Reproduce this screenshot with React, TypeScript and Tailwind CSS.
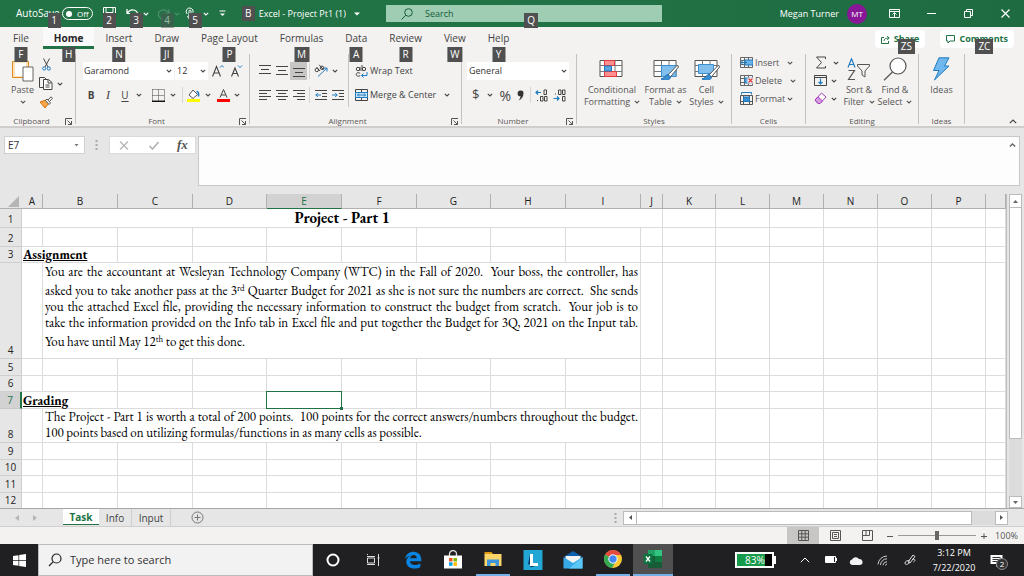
import React from 'react';

interface IconProps {
  w: number;
  h: number;
  className?: string;
  children: React.ReactNode;
}

const Icon: React.FC<IconProps> = ({ w, h, className = '', children }) => (
  <svg
    width={w}
    height={h}
    viewBox={`0 0 ${w} ${h}`}
    fill="none"
    stroke="currentColor"
    className={`shrink-0 ${className}`}
    aria-hidden="true"
  >
    {children}
  </svg>
);

const Chevron: React.FC<{ className?: string }> = ({ className = '' }) => (
  <Icon w={6} h={4} className={className}>
    <path d="M0.8 0.8L3 3L5.2 0.8" strokeWidth={1.1} />
  </Icon>
);

const KeyTip: React.FC<{ label: string; className?: string }> = ({ label, className = '' }) => (
  <span
    className={`absolute z-10 flex h-[15px] min-w-[13px] items-center justify-center bg-[#505050] px-[3px] text-[10px] font-normal text-white ${className}`}
  >
    {label}
  </span>
);

const Divider: React.FC<{ className?: string }> = ({ className = 'h-[70px] bg-[#c4c2c0]' }) => (
  <div className={`w-px shrink-0 ${className}`} />
);

/* ---------- Title bar ---------- */

const TitleBar: React.FC = () => (
  <header className="flex h-[27px] items-center bg-gradient-to-r from-[#217346] via-[#217346] to-[#1f6b41] text-white">
    <div className="flex w-[386px] shrink-0 items-center self-stretch pl-4">
      <label htmlFor="autosave" className="relative flex h-full items-center text-[10px]">
        AutoSave
        <KeyTip label="1" className="-right-px top-[13px]" />
      </label>
      <button
        id="autosave"
        role="switch"
        aria-checked="false"
        className="ml-[2px] flex h-[13px] w-[31px] items-center justify-between rounded-full border border-white pl-[3px] pr-[3px] text-[8px]"
      >
        <span className="size-[6px] rounded-full bg-white" />
        Off
      </button>
      <button aria-label="Save" className="relative ml-[10px] flex h-full w-[14px] items-center">
        <Icon w={13} h={13}>
          <path d="M0.5 0.5h12v12h-10l-2-2zM3 0.5v5h7v-5M4 12v-4h5v4" />
        </Icon>
        <KeyTip label="2" className="left-0 top-[13px]" />
      </button>
      <button aria-label="Undo" className="relative ml-[9px] flex h-full w-[24px] items-center">
        <Icon w={13} h={12}>
          <path d="M1 1v4.5h4.5M1.2 5.2C3 2.5 6 1.2 8.8 2.3c3.4 1.4 3.8 5.2 1.2 7.2L8 11.5" strokeWidth={1.2} />
        </Icon>
        <Chevron className="ml-1" />
        <KeyTip label="3" className="left-1 top-[13px]" />
      </button>
      <button aria-label="Redo" className="relative ml-[7px] flex h-full w-[24px] items-center text-[#4d8f6a]">
        <Icon w={13} h={12}>
          <path d="M12 1v4.5H7.5M11.8 5.2C10 2.5 7 1.2 4.2 2.3c-3.4 1.4-3.8 5.2-1.2 7.2L5 11.5" strokeWidth={1.2} />
        </Icon>
        <Chevron className="ml-1" />
        <KeyTip label="4" className="left-1 top-[13px] opacity-50" />
      </button>
      <button aria-label="Touch mode" className="relative ml-1 flex h-full w-[24px] items-center">
        <Icon w={12} h={14}>
          <path d="M2.2 7A3.5 3.5 0 1 1 8 5.5M4 9V4.2a1 1 0 0 1 2 0V8l4 1v4H5L2.5 9.5z" />
        </Icon>
        <Chevron className="ml-[6px]" />
        <KeyTip label="5" className="left-1 top-[13px]" />
      </button>
      <button aria-label="Customize quick access" className="ml-[10px]">
        <Icon w={7} h={7}>
          <path d="M0.5 1h6" />
          <path d="M1 3.5h5L3.5 6z" fill="currentColor" stroke="none" />
        </Icon>
      </button>
      <button className="relative ml-[16px] flex h-full items-center gap-2 pl-[17px] text-[9px]">
        <KeyTip label="B" className="left-0 top-[6px]" />
        Excel - Project Pt1 (1)
        <Icon w={6} h={4}>
          <path d="M0 0.5h6L3 3.5z" fill="currentColor" stroke="none" />
        </Icon>
      </button>
    </div>
    <label className="relative flex h-[17px] w-[27%] items-center gap-3 bg-[#9fcdb3] pl-[15px] text-[#185c37]">
      <Icon w={12} h={12}>
        <circle cx="7.5" cy="4.5" r="3.8" />
        <path d="M4.8 7.2L0.5 11.5" />
      </Icon>
      <input
        aria-label="Search"
        placeholder="Search"
        className="min-w-0 flex-1 text-[9px] outline-none placeholder:text-[#185c37]"
      />
      <KeyTip label="Q" className="left-1/2 top-2" />
    </label>
    <div className="ml-auto flex items-center">
      <span className="text-[9px]">Megan Turner</span>
      <button className="ml-2 flex size-[20px] items-center justify-center rounded-full bg-[#881798] text-[8px]">
        MT
      </button>
      <button aria-label="Ribbon display options" className="ml-[22px]">
        <Icon w={11} h={9}>
          <path d="M0.5 0.5h10v8h-10zM0.5 2.5h10M5.5 8V4M3.5 5.5l2-2 2 2" />
        </Icon>
      </button>
      <button aria-label="Minimize" className="ml-[27px]">
        <Icon w={9} h={9}>
          <path d="M0 4.5h9" />
        </Icon>
      </button>
      <button aria-label="Restore" className="ml-7">
        <Icon w={9} h={9}>
          <path d="M0.5 2.5h6v6h-6zM2.5 2.5v-2h6v6h-2" />
        </Icon>
      </button>
      <button aria-label="Close" className="ml-7 mr-[14px]">
        <Icon w={9} h={9}>
          <path d="M0.5 0.5l8 8M8.5 0.5l-8 8" strokeWidth={1.2} />
        </Icon>
      </button>
    </div>
  </header>
);

/* ---------- Ribbon tabs ---------- */

const ribbonTabs = [
  { name: 'File', tip: 'F' },
  { name: 'Home', tip: 'H' },
  { name: 'Insert', tip: 'N' },
  { name: 'Draw', tip: 'JI' },
  { name: 'Page Layout', tip: 'P' },
  { name: 'Formulas', tip: 'M' },
  { name: 'Data', tip: 'A' },
  { name: 'Review', tip: 'R' },
  { name: 'View', tip: 'W' },
  { name: 'Help', tip: 'Y' }
];

const RibbonTabs: React.FC = () => (
  <nav className="flex h-[22px] items-stretch pl-[2px] pr-[10px]">
    {ribbonTabs.map((tab) => (
      <button
        key={tab.name}
        className={`relative px-[11px] pt-[4px] text-[10px] leading-[15px] first:mr-[3px] ${
          tab.name === 'Home'
            ? 'border-b-[3px] border-[#217346] bg-[#fbfafa] font-bold text-[#262626]'
            : 'pb-[3px] text-[#444444]'
        }`}
      >
        {tab.name}
        <KeyTip label={tab.tip} className="left-1/2 top-[20px] -translate-x-1/2" />
      </button>
    ))}
    <div className="ml-auto mt-[3px] flex h-[18px] gap-[15px] text-[9px] font-bold text-[#217346]">
      <button className="relative flex items-center gap-1 rounded-sm bg-white px-[6px]">
        <Icon w={9} h={9}>
          <path d="M3 2.5H0.5v6h7V6M3 6c0-2 1.5-3 5-3M6.2 1l2 2-2 2" />
        </Icon>
        Share
        <KeyTip label="ZS" className="left-[23px] top-[9px]" />
      </button>
      <button className="relative flex items-center gap-1 rounded-sm bg-white px-[6px]">
        <Icon w={9} h={9}>
          <path d="M0.5 0.5h8v5.5H4L2 8V6H0.5z" />
        </Icon>
        Comments
        <KeyTip label="ZC" className="left-[35px] top-[9px]" />
      </button>
    </div>
  </nav>
);

/* ---------- Ribbon body ---------- */

interface GroupProps {
  label: string;
  width: string;
  launcher?: boolean;
  children: React.ReactNode;
}

const Group: React.FC<GroupProps> = ({ label, width, launcher, children }) => (
  <section className={`relative flex h-[73px] shrink-0 flex-col ${width}`}>
    <div className="flex flex-1">{children}</div>
    <div className="text-center text-[8px] leading-[12px] text-[#5a5856]">{label}</div>
    {launcher && (
      <button aria-label={`${label} settings`} className="absolute bottom-[2px] right-[3px] text-[#555]">
        <Icon w={7} h={7}>
          <path d="M0.5 7V0.5H7M2.5 2.5l4 4M6.5 3v3.5H3" />
        </Icon>
      </button>
    )}
  </section>
);

const Lines: React.FC<{ rows: string; label: string; active?: boolean }> = ({ rows, label, active }) => (
  <button
    aria-label={label}
    className={`flex h-[18px] w-[17px] items-center justify-center text-[#444] ${active ? 'bg-[#c8c6c4]' : ''}`}
  >
    <Icon w={12} h={12}>
      <path d={rows} />
    </Icon>
  </button>
);

interface BigButtonProps {
  lines: string[];
  drop?: boolean;
  width: string;
  children: React.ReactNode;
}

const BigButton: React.FC<BigButtonProps> = ({ lines, drop, width, children }) => (
  <button className={`flex shrink-0 flex-col items-center pt-[3px] text-[9px] leading-[12px] text-[#555] ${width}`}>
    <span className="mb-1 flex h-[23px] items-center">{children}</span>
    <span>{lines[0]}</span>
    <span className="flex items-center gap-1">
      {lines[1]}
      {drop && <Chevron />}
    </span>
  </button>
);

const TableGlyph: React.FC = () => (
  <>
    <path d="M1 2.5h22v16H1z" fill="#fff" stroke="#555" />
    <path d="M1 7.5h22M1 13.5h22M8.500 2.5v16M16 2.5v16" stroke="#777" />
  </>
);

const BrushGlyph: React.FC = () => (
  <>
    <path d="M24.5 7L15 17l2 2.5L25.5 9z" fill="#fff" stroke="#555" />
    <path d="M15 16.5c-3 0-3 4-7 4.5 3 2.5 9 2 9.5-2z" fill="#3b8fd0" stroke="#1f6fb5" />
  </>
);

const CellGlyph: React.FC = () => (
  <>
    <path d="M0.5 1.5h12v10h-12zM4.5 1v11M8.5 1v11M0 4.5h13M0 8.5h13" stroke="#666" />
    <path d="M5 4h8v5H5z" fill="#6cb2e6" stroke="#1e7bc0" />
  </>
);

const Ribbon: React.FC = () => (
  <div className="flex h-[79px] items-start border-b-2 border-[#d0cecc] pt-[5px] text-[#444]">
    <Group label="Clipboard" width="w-[75px] pr-3" launcher>
      <button className="flex w-[39px] flex-col items-center pl-[9px] pt-[6px] text-[9px] leading-[12px] text-[#555]">
        <Icon w={22} h={22}>
          <path d="M0.5 1.5h16v16h-16z" fill="#fde3bd" stroke="#e08a1e" />
          <path d="M3 3h11v13H3z" fill="#fff" stroke="none" />
          <path d="M11 7h10v14H11z" fill="#fff" stroke="#666" />
        </Icon>
        <span className="mt-[2px]">Paste</span>
        <Chevron className="mt-1" />
      </button>
      <div className="flex flex-col gap-[6px] pl-[5px] pt-1">
        <button aria-label="Cut" className="pl-[1px]">
          <Icon w={9} h={13}>
            <path d="M1.5 0.5L6 9M7.5 0.5L3 9" stroke="#444" />
            <circle cx="2.2" cy="10.5" r="1.6" stroke="#1e7bc0" />
            <circle cx="6.8" cy="10.5" r="1.6" stroke="#1e7bc0" />
          </Icon>
        </button>
        <button aria-label="Copy" className="-ml-[2px] flex items-center gap-1">
          <Icon w={14} h={13}>
            <path d="M4.5 10.5h-4v-10h5l2 2" />
            <path d="M4.5 2.5h5l3.5 3v7H4.5zM9 3v3h3.5M6.5 8h4M6.5 10h4" fill="#fff" />
          </Icon>
          <Chevron />
        </button>
        <button aria-label="Format painter" className="-ml-[2px]">
          <Icon w={14} h={13}>
            <path d="M1 6l5 6 4-5-3-3z" fill="#f6a64b" stroke="#d9730b" />
            <path d="M6.5 4.5l3.5 4L11.5 7l-3.5-4zM9 4L12 0.8l1.5 1.5L10.5 5.5" fill="#fff" stroke="#555" />
          </Icon>
        </button>
      </div>
    </Group>
    <Divider />
    <Group label="Font" width="w-[173px] pr-3" launcher>
      <div className="flex flex-col gap-[6px] pl-[7px] pt-2">
        <div className="flex h-[18px] items-center gap-px text-[9px]">
          <label className="relative flex h-full w-[91px] items-center bg-white">
            <select aria-label="Font name" className="h-full w-full appearance-none pl-px text-[#333] outline-none">
              <option>Garamond</option>
            </select>
            <Chevron className="pointer-events-none absolute right-[2px]" />
          </label>
          <label className="relative flex h-full w-[33px] items-center bg-white">
            <select aria-label="Font size" className="h-full w-full appearance-none pl-[2px] text-[#333] outline-none">
              <option>12</option>
            </select>
            <Chevron className="pointer-events-none absolute right-[2px]" />
          </label>
          <button aria-label="Increase font size" className="ml-[3px]">
            <Icon w={12} h={14}>
              <path d="M0.5 12.5L4.5 2.5l4 10M2 9h5" strokeWidth={1.1} />
              <path d="M8 3.5l2-2 2 2" stroke="#1e7bc0" />
            </Icon>
          </button>
          <button aria-label="Decrease font size" className="ml-[6px]">
            <Icon w={12} h={14}>
              <path d="M0.5 12.5L4 4l3.5 8.5M2 9.5h4" strokeWidth={1.1} />
              <path d="M7 1.5l2 2 2-2" stroke="#1e7bc0" />
            </Icon>
          </button>
        </div>
        <div className="flex h-[18px] items-center text-[10px]">
          <button className="w-4 font-bold">B</button>
          <button className="w-[18px] font-['Liberation_Serif',serif] text-[12px] italic">I</button>
          <button className="w-4 underline underline-offset-2">U</button>
          <Chevron className="ml-[3px]" />
          <button aria-label="Borders" className="ml-[10px] flex items-center gap-[5px]">
            <Icon w={13} h={13}>
              <path d="M0.5 0.5v11M12.5 0.5v11M6.5 0.5v11M0.5 0.5h12M0.5 6.5h12" strokeDasharray="1 1" />
              <path d="M0 12.3h13" stroke="#111" strokeWidth={1.5} />
            </Icon>
            <Chevron />
          </button>
          <Divider className="ml-[6px] h-4 bg-[#d8d6d4]" />
          <button aria-label="Fill color" className="ml-1 flex items-center gap-[5px]">
            <Icon w={13} h={13}>
              <path d="M6 1l4.5 4.5L6 9.5 2 6z" fill="#fff" stroke="#555" />
              <path d="M9.5 2.5c2 0 2.5 2 2 5" stroke="#1e7bc0" strokeWidth={1.5} />
              <path d="M0 10h13v3H0z" fill="#ffff00" stroke="none" />
            </Icon>
            <Chevron />
          </button>
          <button aria-label="Font color" className="ml-[6px] flex items-center gap-1">
            <Icon w={13} h={13}>
              <path d="M3 8.5L6.5 0.5l3.5 8M4.2 6h4.6" />
              <path d="M0 10h13v3H0z" fill="#ff0000" stroke="none" />
            </Icon>
            <Chevron />
          </button>
        </div>
      </div>
    </Group>
    <Divider />
    <Group label="Alignment" width="w-[211px] pr-4" launcher>
      <div className="flex flex-col gap-[6px] pl-[6px] pt-2">
        <div className="flex h-[18px] items-center">
          <Lines label="Top align" rows="M0 0.5h12M2 4.5h8M0 8.5h12" />
          <Lines label="Middle align" rows="M0 1.5h12M2 5.5h8M0 9.5h12" />
          <Lines label="Bottom align" rows="M0 3.5h12M2 7.5h8M0 11.5h12" active />
          <Divider className="ml-[2px] h-4 bg-[#d8d6d4]" />
          <button aria-label="Orientation" className="ml-1 flex items-center gap-1">
            <Icon w={14} h={14}>
              <path d="M4 12.5L13 4M9.5 4H13v3.5" stroke="#1e7bc0" />
              <circle cx="2.8" cy="6" r="1.7" />
              <path d="M2.5 3l3.5 4M5.2 0.8l4.300 5" />
              <circle cx="8" cy="3.8" r="1.7" />
            </Icon>
            <Chevron />
          </button>
        </div>
        <div className="flex h-[18px] items-center">
          <Lines label="Align left" rows="M0 1.5h12M0 4.5h8M0 7.5h12M0 10.5h8" />
          <Lines label="Center" rows="M0 1.5h12M2 4.5h8M0 7.5h12M2 10.5h8" />
          <Lines label="Align right" rows="M0 1.5h12M4 4.5h8M0 7.5h12M4 10.5h8" />
          <Divider className="ml-[2px] h-4 bg-[#d8d6d4]" />
          <button aria-label="Decrease indent" className="ml-[5px]">
            <Icon w={12} h={12}>
              <path d="M0 1.5h12M7 4.5h5M7 7.5h5M0 10.5h12" />
              <path d="M6 6H0.8M2.8 4l-2 2 2 2" stroke="#1e7bc0" />
            </Icon>
          </button>
          <button aria-label="Increase indent" className="ml-[5px]">
            <Icon w={12} h={12}>
              <path d="M0 1.5h12M7 4.5h5M7 7.5h5M0 10.5h12" />
              <path d="M0 6h5.2M3.2 4l2 2-2 2" stroke="#1e7bc0" />
            </Icon>
          </button>
        </div>
      </div>
      <Divider className="ml-1 h-[53px] bg-[#c8c6c4]" />
      <div className="flex flex-col gap-[6px] pl-[6px] pt-2 text-[9px]">
        <button className="flex h-[18px] items-center gap-[2px] whitespace-nowrap">
          <Icon w={13} h={13}>
            <circle cx="3" cy="4" r="1.7" />
            <path d="M5 2v4M7 0v6M5.2 8.2c-3-1.2-4 0-4 1.3s2 2.3 4 1.2" />
            <circle cx="9" cy="4" r="1.7" />
            <path d="M12 7v3.5H6.5M8.5 8.5l-2 2 2 2" stroke="#1e7bc0" />
          </Icon>
          Wrap Text
        </button>
        <button className="flex h-[18px] items-center gap-[2px] whitespace-nowrap">
          <Icon w={13} h={12}>
            <path d="M0.5 0.5h12v11h-12zM6.5 0.5v3M6.5 8.5v3" stroke="#444" />
            <path d="M0.5 3.5h12v5h-12z" fill="#cfe6f8" stroke="#1e7bc0" />
            <path d="M2.5 6h8M4 4.5L2.5 6 4 7.5M9 4.5L10.5 6 9 7.5" stroke="#1e7bc0" />
          </Icon>
          Merge &amp; Center
          <Chevron className="ml-[6px]" />
        </button>
      </div>
    </Group>
    <Divider />
    <Group label="Number" width="w-[114px] pr-3" launcher>
      <div className="flex flex-col gap-[6px] pl-[5px] pt-2">
        <label className="relative flex h-[18px] w-[102px] items-center bg-white text-[9px]">
          <select aria-label="Number format" className="h-full w-full appearance-none pl-[2px] text-[#333] outline-none">
            <option>General</option>
          </select>
          <Chevron className="pointer-events-none absolute right-[2px]" />
        </label>
        <div className="flex h-[18px] items-center whitespace-nowrap">
          <button className="flex items-center gap-2 pl-[5px] text-[13px]">
            $ <Chevron />
          </button>
          <button className="ml-[6px] text-[14px]">%</button>
          <button aria-label="Comma style" className="ml-[6px]">
            <Icon w={7} h={11}>
              <path
                d="M3.5 0.5a2.5 2.5 0 0 1 3 2.7C6.5 6.5 5 9 1.5 10.5c1.5-1.5 2-3 2-4.2A2.9 2.9 0 0 1 3.5 0.5z"
                fill="#333"
                stroke="none"
              />
            </Icon>
          </button>
          <Divider className="ml-[6px] h-4 bg-[#d8d6d4]" />
          <button aria-label="Increase decimal" className="ml-1">
            <Icon w={13} h={13}>
              <path d="M6 3.5H1M3 1.5l-2 2 2 2" stroke="#1e7bc0" strokeWidth={1.2} />
              <path d="M9 1h2.5v4.5H9zM5.5 7.5H8V12H5.5zM9.5 7.5H12V12H9.5zM2.5 11v1" />
            </Icon>
          </button>
          <button aria-label="Decrease decimal" className="ml-[5px]">
            <Icon w={13} h={13}>
              <path d="M0.5 9.5h5.5M4 7.5l2 2-2 2" stroke="#1e7bc0" strokeWidth={1.2} />
              <path d="M5.5 1H8v4.5H5.5zM9.5 1H12v4.5H9.5zM9.5 7.5H12V12H9.5zM2.5 4.5v1" />
            </Icon>
          </button>
        </div>
      </div>
    </Group>
    <Divider />
    <Group label="Styles" width="w-[154px]">
      <BigButton lines={['Conditional', 'Formatting']} drop width="w-[66px] pl-1">
        <Icon w={26} h={22}>
          <TableGlyph />
          <path d="M5.5 2.5h10v5h-10zM5.5 13.5h12v5h-12z" fill="#ff8f8f" stroke="#e23b3b" />
          <path d="M5.5 8h7v5h-7z" fill="#5aa5e0" stroke="#1e7bc0" />
        </Icon>
      </BigButton>
      <BigButton lines={['Format as', 'Table']} drop width="w-[45px]">
        <Icon w={26} h={22}>
          <TableGlyph />
          <path d="M8.5 7.5H23v11H8.5z" fill="#83bfed" stroke="#3b8fd0" />
          <BrushGlyph />
        </Icon>
      </BigButton>
      <BigButton lines={['Cell', 'Styles']} drop width="w-[37px]">
        <Icon w={26} h={22}>
          <TableGlyph />
          <path d="M4.5 6.5h15v9h-15z" fill="#83bfed" stroke="#3b8fd0" />
          <BrushGlyph />
        </Icon>
      </BigButton>
    </Group>
    <Divider />
    <Group label="Cells" width="w-[73px]">
      <div className="flex flex-col gap-[5px] pl-2 pt-[2px] text-[9px] leading-[13px] text-[#555]">
        <button className="flex items-center gap-[2px]">
          <Icon w={13} h={13}>
            <CellGlyph />
            <path d="M7 6.5H1M3 4.5l-2 2 2 2" stroke="#1e7bc0" />
          </Icon>
          Insert <Chevron className="ml-[6px]" />
        </button>
        <button className="flex items-center gap-[2px]">
          <Icon w={13} h={13}>
            <CellGlyph />
            <path d="M7.5 3.5h6v6h-6z" fill="#f3f2f1" stroke="none" />
            <path d="M8.5 4.5l4 4M12.5 4.5l-4 4" stroke="#e23b3b" strokeWidth={1.2} />
          </Icon>
          Delete <Chevron className="ml-[6px]" />
        </button>
        <button className="flex items-center gap-[2px]">
          <Icon w={13} h={13}>
            <path d="M0.5 3.5h12v9h-12zM3.5 3v10M9.5 3v10M0 9.5h13" stroke="#555" />
            <path d="M3.5 5h6v4.5h-6z" fill="#3b8fd0" stroke="#1e7bc0" />
            <path d="M1.5 2.5v-2h10v2" stroke="#1e7bc0" />
          </Icon>
          Format <Chevron />
        </button>
      </div>
    </Group>
    <Divider />
    <Group label="Editing" width="w-[112px]">
      <div className="flex w-[34px] flex-col gap-[5px] pl-2 pt-[2px]">
        <button aria-label="AutoSum" className="flex items-center gap-[6px]">
          <Icon w={13} h={13}>
            <path d="M11.5 3V1h-9l5 5.5-5 5.5h9v-2" />
          </Icon>
          <Chevron />
        </button>
        <button aria-label="Fill" className="flex items-center gap-1">
          <Icon w={13} h={13}>
            <path d="M0.5 1.5h12v10h-12zM0.5 3.5h12" />
            <path d="M6.5 4.5v5.5M4.5 8l2 2 2-2" stroke="#1e7bc0" strokeWidth={1.2} />
          </Icon>
          <Chevron />
        </button>
        <button aria-label="Clear" className="flex items-center gap-1">
          <Icon w={13} h={13}>
            <path d="M7.5 1L12 5 6 11.5H4L1 8z" fill="#fff" stroke="#a33fb5" />
            <path d="M4 4.8L8.5 9 6 11.5H4L1 8z" fill="#d79be3" stroke="#a33fb5" />
          </Icon>
          <Chevron />
        </button>
      </div>
      <BigButton lines={['Sort &', 'Filter']} drop width="w-[38px]">
        <Icon w={24} h={22}>
          <path d="M1 9.5L4.5 0.8 8 9.5M2.3 6.5h4.4" stroke="#1e7bc0" strokeWidth={1.2} />
          <path d="M1.5 12.5H7.5L1.5 21.5H8" strokeWidth={1.2} />
          <path d="M10.5 6.5h12v1.5l-4.5 5v6l-3-2v-4l-4.5-5z" />
        </Icon>
      </BigButton>
      <BigButton lines={['Find &', 'Select']} drop width="w-[34px]">
        <Icon w={24} h={24}>
          <circle cx="15" cy="9" r="8" fill="#fff" strokeWidth={1.2} />
          <path d="M9.5 15L1 23.3" strokeWidth={1.2} />
        </Icon>
      </BigButton>
    </Group>
    <Divider />
    <Group label="Ideas" width="w-[45px]">
      <BigButton lines={['Ideas']} width="w-full">
        <Icon w={19} h={24}>
          <path d="M7 0.8h10L12.5 9H17L2.5 23 7 13.5H1.5z" fill="#6fb7ec" stroke="#1e7bc0" />
        </Icon>
      </BigButton>
    </Group>
    <Divider />
    <button aria-label="Collapse ribbon" className="mb-[2px] ml-auto mr-[7px] self-end">
      <Icon w={8} h={5}>
        <path d="M0.8 4.2L4 1l3.2 3.2" strokeWidth={1.2} />
      </Icon>
    </button>
  </div>
);

/* ---------- Formula bar ---------- */

const FormulaBar: React.FC = () => (
  <div className="flex items-start bg-[#e6e6e6] pb-2 pl-1 pr-1 pt-2">
    <label className="flex h-[18px] w-[81px] items-center border border-[#d0d0d0] bg-white pr-[5px]">
      <input
        aria-label="Name box"
        defaultValue="E7"
        className="min-w-0 flex-1 pl-[3px] text-[10px] text-[#333] outline-none"
      />
      <Icon w={5} h={3}>
        <path d="M0.5 0h4L2.5 2.5z" fill="#777" stroke="none" />
      </Icon>
    </label>
    <Icon w={3} h={10} className="ml-[10px] mt-1">
      <path d="M1.5 0v10" stroke="#aaa" strokeWidth={2} strokeDasharray="2 2" />
    </Icon>
    <div className="ml-[11px] flex h-[18px] w-[87px] items-center border border-[#dadada] bg-white pl-[9px] text-[#b5b5b5]">
      <button aria-label="Cancel">
        <Icon w={10} h={9}>
          <path d="M1 0.5l8 8M9 0.5l-8 8" strokeWidth={1.3} />
        </Icon>
      </button>
      <button aria-label="Enter" className="ml-5">
        <Icon w={10} h={9}>
          <path d="M0.5 5L3.5 8L9.5 1" strokeWidth={1.7} />
        </Icon>
      </button>
      <button className="ml-[18px] font-['Liberation_Serif',serif] text-[13px] leading-[16px] font-bold text-[#555] italic">
        fx
      </button>
    </div>
    <div className="relative ml-[2px] flex h-[50px] flex-1 border border-[#c8c8c8] bg-[#fdfdfd]">
      <textarea aria-label="Formula" className="w-full resize-none outline-none" />
      <button aria-label="Collapse formula bar" className="absolute right-[3px] top-[6px] text-[#666]">
        <Icon w={7} h={4} className="block">
          <path d="M0.8 3.5L3.5 1l2.7 2.5" strokeWidth={1.4} />
        </Icon>
      </button>
    </div>
  </div>
);

/* ---------- Sheet ---------- */

const columns = [
  { name: 'A', width: 21 },
  { name: 'B', width: 75 },
  { name: 'C', width: 75 },
  { name: 'D', width: 74 },
  { name: 'E', width: 75 },
  { name: 'F', width: 75 },
  { name: 'G', width: 74 },
  { name: 'H', width: 75 },
  { name: 'I', width: 75 },
  { name: 'J', width: 22 },
  { name: 'K', width: 53 },
  { name: 'L', width: 54 },
  { name: 'M', width: 54 },
  { name: 'N', width: 54 },
  { name: 'O', width: 54 },
  { name: 'P', width: 54 },
  { name: '', width: 0 }
];

const cell = 'border-b border-r border-[#dcdcdc] p-0';
const heading = `${cell} pl-px text-[13px] leading-[15px] font-bold underline`;

const Blanks: React.FC<{ count: number }> = ({ count }) => (
  <>
    {Array.from({ length: count }, (_, i) => (
      <td key={i} className={cell} />
    ))}
  </>
);

const SheetRow: React.FC<{ n: number; height: string; children: React.ReactNode }> = ({ n, height, children }) => (
  <tr className={height}>
    <th
      scope="row"
      className={`border-b p-0 align-bottom text-[10px] leading-[15px] font-normal ${
        n === 7
          ? 'border-b-[#c8c8c8] border-r-2 border-r-[#217346] bg-[#d2d2d2] text-[#217346]'
          : 'border-r border-[#cfcfcf] bg-[#e6e6e6] text-[#222]'
      }`}
    >
      {n}
    </th>
    {children}
  </tr>
);

const assignment = [
  <>You are the accountant at Wesleyan Technology Company (WTC) in the Fall of 2020.&nbsp; Your boss, the controller, has</>,
  <>asked you to take another pass at the 3<sup className="text-[9px]">rd</sup> Quarter Budget for 2021 as she is not sure the numbers are correct.&nbsp; She sends</>,
  <>you the attached Excel file, providing the necessary information to construct the budget from scratch.&nbsp; Your job is to</>,
  <>take the information provided on the Info tab in Excel file and put together the Budget for 3Q, 2021 on the Input tab.</>
];

const Sheet: React.FC = () => (
  <main className="flex min-h-[200px] grow basis-0 bg-[#e6e6e6]">
    <div className="relative flex-1 overflow-hidden border-r border-[#bdbdbd] bg-white">
      <table className="absolute inset-x-0 top-0 w-full table-fixed border-separate border-spacing-0">
        <colgroup>
          <col style={{ width: 22 }} />
          {columns.map((c) => (
            <col key={c.name} style={c.width ? { width: c.width } : undefined} />
          ))}
        </colgroup>
        <thead>
          <tr className="h-[15px] bg-[#e6e6e6] text-[10px] leading-[14px]">
            <th aria-label="Select all" className="border-b border-[#b0b0b0] p-0">
              <Icon w={11} h={11} className="ml-2">
                <path d="M11 0v11H0z" fill="#b5b5b5" stroke="none" />
              </Icon>
            </th>
            {columns.map((c) => (
              <th
                key={c.name}
                scope="col"
                className={`border-r p-0 font-normal ${
                  c.name === 'E'
                    ? 'border-b border-b-[#217346] border-r-[#b0b0b0] bg-[#d2d2d2] text-[#217346]'
                    : 'border-b border-[#b0b0b0] text-[#222]'
                }`}
              >
                {c.name}
              </th>
            ))}
          </tr>
        </thead>
        <tbody className="font-['EB_Garamond','Liberation_Serif',serif] text-[13px] text-black [&_th]:font-['Open_Sans',sans-serif]">
          <SheetRow n={1} height="h-[19px]">
            <td colSpan={10} className={`${cell} text-center text-[15px] leading-[16px] font-bold`}>
              Project - Part 1
            </td>
            <Blanks count={7} />
          </SheetRow>
          <SheetRow n={2} height="h-[19px]">
            <Blanks count={17} />
          </SheetRow>
          <SheetRow n={3} height="h-4">
            <td colSpan={2} className={heading}>
              Assignment
            </td>
            <Blanks count={15} />
          </SheetRow>
          <SheetRow n={4} height="h-24">
            <td className={cell} />
            <td colSpan={8} className={`${cell} px-[2px] pt-px align-top leading-4`}>
              {assignment.map((line, i) => (
                <div key={i} className={`whitespace-nowrap [text-align-last:justify] ${i === 1 ? 'pt-[3px]' : ''}`}>
                  {line}
                </div>
              ))}
              <div className="pt-[3px]">
                You have until May 12<sup className="text-[9px]">th</sup> to get this done.
              </div>
            </td>
            <Blanks count={8} />
          </SheetRow>
          <SheetRow n={5} height="h-[17px]">
            <Blanks count={17} />
          </SheetRow>
          <SheetRow n={6} height="h-4">
            <Blanks count={17} />
          </SheetRow>
          <SheetRow n={7} height="h-[17px]">
            <td colSpan={2} className={heading}>
              Grading
            </td>
            <Blanks count={2} />
            <td className={`${cell} relative`}>
              <div className="absolute -inset-px border border-[#217346]">
                <span className="absolute -bottom-[2px] -right-[2px] size-[3px] bg-[#217346]" />
              </div>
            </td>
            <Blanks count={12} />
          </SheetRow>
          <SheetRow n={8} height="h-[34px]">
            <td className={cell} />
            <td colSpan={8} className={`${cell} px-[2px] align-top leading-4`}>
              <div className="whitespace-nowrap [text-align-last:justify]">
                The Project - Part 1 is worth a total of 200 points.&nbsp; 100 points for the correct answers/numbers
                throughout the budget.
              </div>
              <div className="whitespace-nowrap">
                100 points based on utilizing formulas/functions in as many cells as possible.
              </div>
            </td>
            <Blanks count={8} />
          </SheetRow>
          {[9, 10, 11, 12].map((n) => (
            <SheetRow key={n} n={n} height={n % 2 ? 'h-[17px]' : 'h-4'}>
              <Blanks count={17} />
            </SheetRow>
          ))}
        </tbody>
      </table>
    </div>
    <div className="mx-[2px] flex w-[13px] flex-col text-[#666]">
      <button
        aria-label="Scroll up"
        className="flex h-[14px] items-center justify-center border border-[#bbb] bg-white"
      >
        <Icon w={5} h={3}>
          <path d="M0 3h5L2.5 0z" fill="currentColor" stroke="none" />
        </Icon>
      </button>
      <div className="w-full grow-[4] border border-t-0 border-[#bbb] bg-white" />
      <div className="grow bg-[#dcdcdc]" />
      <button
        aria-label="Scroll down"
        className="flex h-3 items-center justify-center border border-[#bbb] bg-white"
      >
        <Icon w={5} h={3}>
          <path d="M0 0h5L2.5 3z" fill="currentColor" stroke="none" />
        </Icon>
      </button>
    </div>
  </main>
);

const SheetTabs: React.FC = () => (
  <div className="flex h-[18px] items-stretch border-t border-[#a6a6a6] bg-[#e6e6e6] text-[10px] leading-[14px] text-[#444]">
    <div className="flex w-[63px] shrink-0 items-center gap-[14px] pl-[15px] text-[#b5b5b5]">
      <button aria-label="Previous sheet">
        <Icon w={4} h={6}>
          <path d="M4 0v6L0 3z" fill="currentColor" stroke="none" />
        </Icon>
      </button>
      <button aria-label="Next sheet">
        <Icon w={4} h={6}>
          <path d="M0 0v6l4-3z" fill="currentColor" stroke="none" />
        </Icon>
      </button>
    </div>
    <button className="mb-px w-9 border-b border-[#217346] bg-white font-bold text-[#217346]">Task</button>
    <button className="w-[33px] border-r border-[#cfcfcf]">Info</button>
    <button className="w-[39px] border-r border-[#cfcfcf]">Input</button>
    <button aria-label="New sheet" className="ml-5">
      <Icon w={13} h={13}>
        <circle cx="6.5" cy="6.5" r="5.5" stroke="#777" />
        <path d="M3.5 6.5h6M6.5 3.5v6" stroke="#777" />
      </Icon>
    </button>
    <div className="ml-auto flex w-2/5 items-center pr-4 text-[#555]">
      <Icon w={3} h={10} className="mr-[6px]">
        <path d="M1.5 0v10" stroke="#aaa" strokeWidth={2} strokeDasharray="2 2" />
      </Icon>
      <button
        aria-label="Scroll left"
        className="flex h-[14px] w-[14px] items-center justify-center border border-[#bbb] bg-white"
      >
        <Icon w={3} h={5}>
          <path d="M3 0v5L0 2.5z" fill="currentColor" stroke="none" />
        </Icon>
      </button>
      <div className="h-[14px] flex-1 border border-l-0 border-[#bbb] bg-white" />
      <div className="h-[14px] w-[23px] bg-[#dcdcdc]" />
      <button
        aria-label="Scroll right"
        className="flex h-[14px] w-[13px] items-center justify-center border border-[#bbb] bg-white"
      >
        <Icon w={3} h={5}>
          <path d="M0 0v5l3-2.5z" fill="currentColor" stroke="none" />
        </Icon>
      </button>
    </div>
  </div>
);

const StatusBar: React.FC = () => (
  <div className="flex h-[18px] items-center justify-end border-t border-[#cfcfcf] bg-[#f3f2f1] pr-[6px] text-[#555]">
    <button aria-label="Normal view" className="flex h-full w-8 items-center justify-center bg-[#c8c6c4]">
      <Icon w={11} h={11}>
        <path d="M0.5 0.5h10v10h-10zM3.8 0v11M7.2 0v11M0 3.8h11M0 7.2h11" />
      </Icon>
    </button>
    <button aria-label="Page layout view" className="flex h-full w-8 items-center justify-center">
      <Icon w={11} h={11}>
        <path d="M0.5 0.5h10v10h-10zM2.5 2.5h6v6h-6zM4 4.5h3M4 6.5h3" />
      </Icon>
    </button>
    <button aria-label="Page break view" className="flex h-full w-8 items-center justify-center">
      <Icon w={11} h={11}>
        <path d="M0.5 0.5h10v10h-10zM4 0.5v5M7.5 0.5v5H0.5" />
      </Icon>
    </button>
    <button aria-label="Zoom out" className="ml-1">
      <Icon w={6} h={6}>
        <path d="M0 3.5h6" />
      </Icon>
    </button>
    <input
      type="range"
      aria-label="Zoom"
      className="mx-[5px] h-[9px] w-[78px] appearance-none bg-[linear-gradient(#999,#999)] bg-[length:100%_1px] bg-center bg-no-repeat [&::-webkit-slider-thumb]:h-[9px] [&::-webkit-slider-thumb]:w-1 [&::-webkit-slider-thumb]:appearance-none [&::-webkit-slider-thumb]:bg-[#666]"
    />
    <button aria-label="Zoom in">
      <Icon w={6} h={6}>
        <path d="M0 3.5h6M3 0.5v6" />
      </Icon>
    </button>
    <span className="ml-2 text-[9px]">100%</span>
  </div>
);

/* ---------- Taskbar ---------- */

const idle = 'w-10';
const running = 'mx-[3px] w-[34px] border-b-2 border-[#76b0e8]';
const active = 'w-10 border-b-2 border-[#76b0e8] bg-[#505050]';

const apps = [
  {
    name: 'Cortana',
    style: idle,
    icon: <circle cx="10" cy="10" r="5.5" stroke="#fff" strokeWidth={2} />
  },
  {
    name: 'Task View',
    style: idle,
    icon: <path d="M4.5 5V4M4 6.5h8M4.5 8v5h7V8zM4 14.5h8M15.5 4v12M14.5 8h2" stroke="#ddd" />
  },
  {
    name: 'Edge',
    style: idle,
    icon: (
      <path
        d="M2 9C3 4 6.500 1.800 10.500 1.800c5 0 7.800 3.700 7.800 7.700v1.700H7c.2 2.500 2.300 3.800 5 3.800 2 0 3.700-.6 5.300-1.500v3.700c-1.700.9-3.500 1.300-5.700 1.300-5 0-8.300-2.700-8.300-6.800 0-2.600 1.500-4.700 4-5.900C4.800 6.300 3 7.500 2 9zM7.200 8.200h6.500c0-2-1-3.300-3-3.300-1.900 0-3.200 1.300-3.500 3.300z"
        fill="#0a84e0"
        stroke="none"
      />
    )
  },
  {
    name: 'Store',
    style: idle,
    icon: (
      <>
        <path d="M6.5 6V4a3.500 3.500 0 0 1 7 0v2" stroke="#ddd" strokeWidth={1.3} />
        <path d="M1 5.500h18v13H1z" fill="#fff" stroke="none" />
        <path d="M6 8h3.500v3.500H6z" fill="#f25022" stroke="none" />
        <path d="M10.500 8H14v3.500h-3.500z" fill="#7fba00" stroke="none" />
        <path d="M6 12.300h3.500v3.500H6z" fill="#00a4ef" stroke="none" />
        <path d="M10.500 12.300H14v3.500h-3.500z" fill="#ffb900" stroke="none" />
      </>
    )
  },
  {
    name: 'File Explorer',
    style: running,
    icon: (
      <>
        <path d="M1.500 3h7l1.500 2h-8.500z" fill="#dc9a10" stroke="none" />
        <path d="M1.500 5h17v12h-17z" fill="#fbd567" stroke="none" />
        <path d="M4 17v-6.500h12V17h-3.500v-3h-5v3z" fill="#3f96dd" stroke="none" />
      </>
    )
  },
  {
    name: 'Lockdown Browser',
    style: idle,
    icon: (
      <>
        <path d="M0.500 0h19v20h-19z" fill="#22a7d4" stroke="none" />
        <path d="M5 14L7 4v13h5z" fill="#0b3e70" stroke="none" />
        <path d="M7 4h3v9h5v3H7z" fill="#fff" stroke="none" />
      </>
    )
  },
  {
    name: 'Mail',
    style: idle,
    icon: (
      <>
        <path d="M0.500 7L10 1l9.500 6z" fill="#0e5fae" stroke="none" />
        <path d="M2.500 6h15v8h-15z" fill="#f3f3f3" stroke="none" />
        <path d="M0.500 7l9.500 6 9.500-6v11.500h-19z" fill="#38a9e8" stroke="none" />
        <path d="M19.500 7L6 18.500h13.500z" fill="#5cc6f7" stroke="none" />
      </>
    )
  },
  {
    name: 'Chrome',
    style: running,
    icon: (
      <>
        <circle cx="10" cy="10" r="9" fill="#fcc934" stroke="none" />
        <path d="M10 10L2.200 5.500A9 9 0 0 0 9 19l4-7z" fill="#34a853" stroke="none" />
        <path d="M10 10L2.200 5.500a9 9 0 0 1 15.900 0.500H10z" fill="#e34b3f" stroke="none" />
        <circle cx="10" cy="10" r="4.200" fill="#4285f4" stroke="#fff" />
      </>
    )
  },
  {
    name: 'Excel',
    style: active,
    icon: (
      <>
        <path d="M5 1h14v18H5z" fill="#21a366" stroke="none" />
        <path d="M12 1h7v6h-7z" fill="#33c481" stroke="none" />
        <path d="M5 7h7v12H5zM12 13h7v6h-7z" fill="#185c37" stroke="none" />
        <path d="M12 7h7v6h-7z" fill="#107c41" stroke="none" />
        <path d="M0.500 5h9v10h-9z" fill="#0f7340" stroke="none" />
        <path d="M3 7.500l4 5M7 7.500l-4 5" stroke="#fff" strokeWidth={1.3} />
      </>
    )
  }
];

const Taskbar: React.FC = () => (
  <footer className="flex h-8 items-stretch bg-[#202022] text-white">
    <button aria-label="Start" className="flex w-[38px] items-center justify-center">
      <Icon w={13} h={13}>
        <path
          d="M0 2l5.500-.8V6H0zM6.200 1L13 0v6H6.200zM0 6.800h5.500v4.900L0 11zM6.200 6.800H13V13l-6.800-1z"
          fill="#fff"
          stroke="none"
        />
      </Icon>
    </button>
    <label className="flex w-[275px] items-center gap-2 border border-[#bbb] bg-[#f2f2f2] pl-[9px] text-[#222]">
      <Icon w={14} h={14}>
        <circle cx="8.5" cy="5.5" r="4.5" strokeWidth={1.2} />
        <path d="M5.3 8.7L1 13" strokeWidth={1.2} />
      </Icon>
      <input
        aria-label="Type here to search"
        placeholder="Type here to search"
        className="min-w-0 flex-1 text-[11px] outline-none placeholder:text-[#333]"
      />
    </label>
    {apps.map((app) => (
      <button key={app.name} aria-label={app.name} className={`flex items-center justify-center ${app.style}`}>
        <Icon w={20} h={20}>{app.icon}</Icon>
      </button>
    ))}
    <div className="ml-auto flex items-center">
      <div className="flex items-center">
        <div className="flex h-4 w-[39px] items-center border-2 border-white bg-gradient-to-r from-[#189a4b] from-80% to-black to-80% pl-2 text-[10px]">
          83%
        </div>
        <span className="h-2 w-[2px] bg-white" />
      </div>
      <button aria-label="Show hidden icons" className="ml-6">
        <Icon w={10} h={6}>
          <path d="M0.8 5.2L5 1l4.2 4.2" />
        </Icon>
      </button>
      <Icon w={12} h={8} className="ml-[15px]">
        <path d="M0.5 0.5h10v6h-10zM11.5 2v3" stroke="#fff" />
        <path d="M1 1h8v5H1z" fill="#fff" stroke="none" />
      </Icon>
      <Icon w={14} h={9} className="ml-3">
        <path d="M3 9a2.800 2.800 0 0 1 0-5.500A4 4 0 0 1 10 3a3 3 0 0 1 1 6z" fill="#f2f2f2" stroke="none" />
      </Icon>
      <Icon w={11} h={11} className="ml-[14px]">
        <path
          d="M1 9.500A9 9 0 0 1 10 1M3.500 10A6.500 6.500 0 0 1 10 3.800M6 10.200A4 4 0 0 1 10 6.700M8.500 10.500a2 2 0 0 1 1.500-1.500"
          stroke="#ccc"
        />
      </Icon>
      <Icon w={12} h={12} className="ml-4">
        <path d="M6 8c-2 3-5 3-5 1s3-3 5-2M4 8l5-7 2 1.500-5 6.500zM8 5.500c3-1 4 1 1.500 2.500" stroke="#ddd" />
      </Icon>
      <div className="ml-3 w-[52px] text-center text-[9px] leading-[15px] whitespace-nowrap">
        <div>3:12 PM</div>
        <div>7/22/2020</div>
      </div>
      <button aria-label="Notifications" className="relative ml-[10px] mr-[14px] h-5 w-5">
        <Icon w={13} h={13}>
          <path d="M0.5 1h12v9H9L6 13v-3H0.5z" fill="#fff" stroke="none" />
          <path d="M2.500 3.500h8M2.500 5.500h8M2.500 7.500h5" stroke="#333" />
        </Icon>
        <span className="absolute bottom-0 right-[2px] flex size-3 items-center justify-center rounded-full border border-[#888] bg-[#333] text-[8px]">
          2
        </span>
      </button>
    </div>
  </footer>
);

const App: React.FC = () => (
  <div className="flex min-h-screen flex-col bg-[#f3f2f1] font-['Open_Sans',sans-serif]">
    <TitleBar />
    <RibbonTabs />
    <Ribbon />
    <FormulaBar />
    <Sheet />
    <SheetTabs />
    <StatusBar />
    <Taskbar />
  </div>
);

export default App;
